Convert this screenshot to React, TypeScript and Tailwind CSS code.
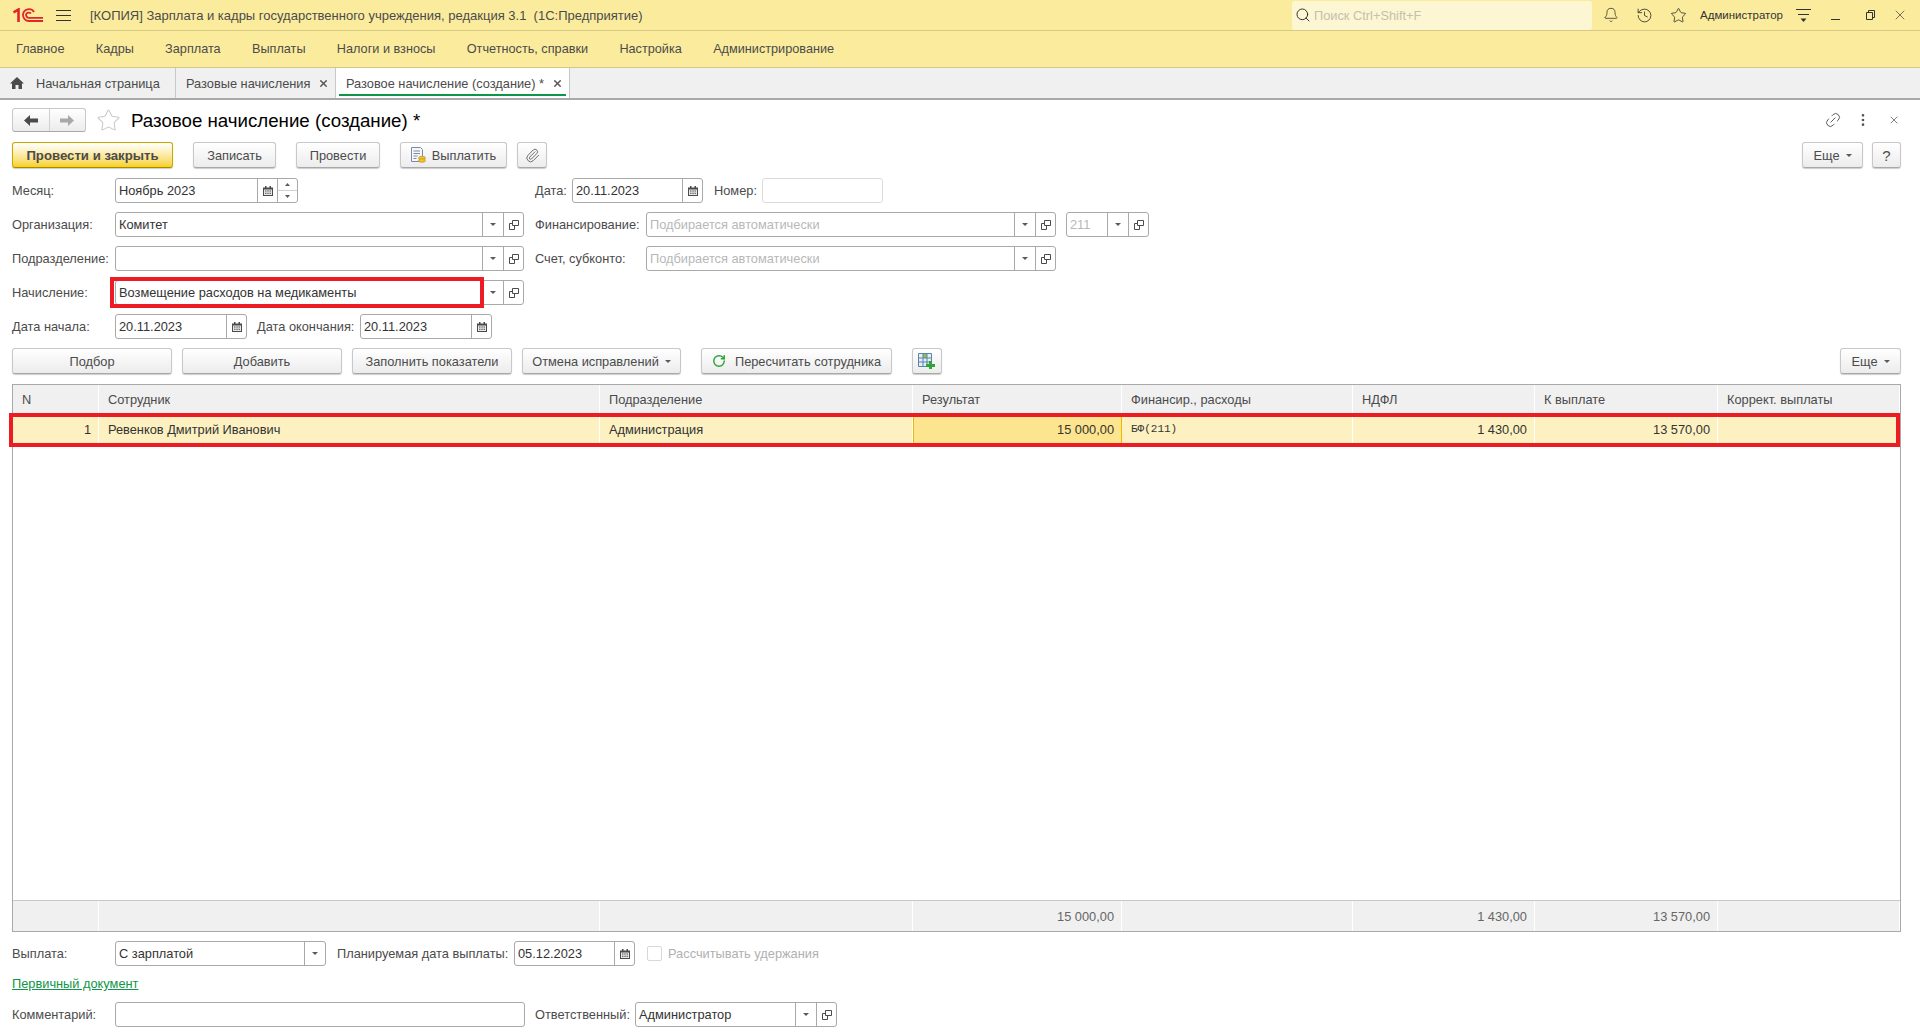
import { Bell, History, Paperclip, Search, Star, Link2, X, EllipsisVertical, RotateCw } from 'lucide-react';
import type { ReactNode } from 'react';

const DropIcon = () => (
  <svg width="6" height="3" viewBox="0 0 6 3">
    <path d="M0 0h6L3 3z" fill="#5a5a5a" />
  </svg>
);

const OpenIcon = () => (
  <svg width="10" height="10" viewBox="0 0 10 10" fill="none" stroke="#4b4b4b">
    <path d="M3.500.5h6v5h-6z" />
    <path d="M3.500 3.500H.5v6h5V6" />
  </svg>
);

const CalendarIcon = () => (
  <svg width="10" height="10" viewBox="0 0 10 10">
    <path d="M0 1.500h10V10H0z" fill="#4b4b4b" />
    <path d="M1 3.500h8V9H1z" fill="#e8e8e8" />
    <path d="M2 0h1.500v2.500H2zM6.500 0H8v2.500H6.500z" fill="#4b4b4b" />
    <path d="M2 4.500h1.500v1H2zM4.300 4.500h1.500v1H4.300zM6.500 4.500H8v1H6.500zM2 6.800h1.500v1H2zM4.300 6.800h1.500v1H4.300zM6.500 6.800H8v1H6.500z" fill="#4b4b4b" />
  </svg>
);

const Cell = ({ w, children }: { w: string; children: ReactNode }) => (
  <div className={`flex h-full flex-none items-center justify-center border-l border-[#a9a9a9] ${w}`}>{children}</div>
);

interface FieldProps {
  w: string;
  text?: string;
  hint?: boolean;
  calendar?: boolean;
  spin?: boolean;
  drop?: boolean;
  open?: boolean;
  light?: boolean;
}

const Field = ({ w, text, hint, calendar, spin, drop, open, light }: FieldProps) => (
  <div
    className={`flex h-[25px] flex-none items-center rounded-[3px] border bg-white ${w} ${
      light ? 'border-[#dcdcdc]' : 'border-[#a9a9a9]'
    }`}
  >
    <div className={`min-w-0 flex-1 whitespace-nowrap pl-[3px] ${hint ? 'text-[#b8b8b8]' : 'text-[#333333]'}`}>{text}</div>
    {calendar && (
      <Cell w="w-[20px]">
        <CalendarIcon />
      </Cell>
    )}
    {spin && (
      <div className="flex h-full w-[20px] flex-none flex-col border-l border-[#a9a9a9]">
        <div className="flex flex-1 items-center justify-center border-b border-[#d0d0d0]">
          <svg width="5" height="3" viewBox="0 0 5 3">
            <path d="M0 3h5L2.500 0z" fill="#5a5a5a" />
          </svg>
        </div>
        <div className="flex flex-1 items-center justify-center">
          <svg width="5" height="3" viewBox="0 0 5 3">
            <path d="M0 0h5L2.500 3z" fill="#5a5a5a" />
          </svg>
        </div>
      </div>
    )}
    {drop && (
      <Cell w="w-[21px]">
        <DropIcon />
      </Cell>
    )}
    {open && (
      <Cell w="w-[20px]">
        <OpenIcon />
      </Cell>
    )}
  </div>
);

const Label = ({ w, children, className = '' }: { w: string; children: ReactNode; className?: string }) => (
  <div className={`flex-none whitespace-nowrap text-[#4b4b4b] ${w} ${className}`}>{children}</div>
);

const Button = ({ w, children, className = '' }: { w: string; children: ReactNode; className?: string }) => (
  <button
    className={`flex h-[26px] flex-none items-center justify-center gap-[6px] whitespace-nowrap rounded-[3px] border border-[#c8c8c8] border-b-[#a8a8a8] bg-gradient-to-b from-white to-[#ececec] text-[#4b4b4b] shadow-[0_1px_1px_rgba(0,0,0,0.2)] ${w} ${className}`}
  >
    {children}
  </button>
);

const columns = 'grid grid-cols-[86px_501px_313px_209px_231px_182px_183px_182px]';

const menuItems = ['Главное', 'Кадры', 'Зарплата', 'Выплаты', 'Налоги и взносы', 'Отчетность, справки', 'Настройка', 'Администрирование'];

const headers = ['N', 'Сотрудник', 'Подразделение', 'Результат', 'Финансир., расходы', 'НДФЛ', 'К выплате', 'Коррект. выплаты'];

const totals = ['', '', '', '15 000,00', '', '1 430,00', '13 570,00', ''];

const App = () => {
  return (
    <div className="relative flex h-[1034px] w-[1920px] flex-col overflow-hidden bg-white font-['Liberation_Sans',Arial,sans-serif] text-[12.800px] leading-[17px] text-[#4b4b4b]">
      {/* Заголовок окна */}
      <div className="flex h-[31px] flex-none items-center border-b border-[#d8c983] bg-[#fbec9d]">
        <svg className="ml-[13px] flex-none" width="30" height="14" viewBox="0 0 30 14" fill="none" stroke="#e0252b">
          <path d="M0.500 4.500 L5.500 1.500 V14" strokeWidth="2.600" />
          <path d="M21 4 A6 6 0 0 0 10 6.500 A6 6 0 0 0 16 13 H30" strokeWidth="1.800" />
          <path d="M18 5.500 A3 3 0 0 0 13 6.500 A3 3 0 0 0 16 9.800 H30" strokeWidth="1.800" />
        </svg>
        <svg className="ml-[13px] flex-none" width="15" height="11" viewBox="0 0 15 11" stroke="#333333">
          <path d="M0 .5h15M0 5.500h15M0 10.500h15" />
        </svg>
        <div className="ml-[19px] w-[1202px] flex-none whitespace-nowrap text-[13px]">[КОПИЯ] Зарплата и кадры государственного учреждения, редакция 3.1&nbsp; (1С:Предприятие)</div>
        <div className="flex h-[29px] w-[300px] flex-none items-center gap-[3px] rounded-[3px] bg-[#fdf6d3] pl-[3px] text-[#c4c0ac]">
          <Search size={16} strokeWidth={1.500} className="text-[#333333]" />
          Поиск Ctrl+Shift+F
        </div>
        <Bell size={16} strokeWidth={1.200} className="ml-[11px] flex-none text-[#333333]" />
        <History size={17} strokeWidth={1.200} className="ml-[17px] flex-none text-[#333333]" />
        <Star size={17} strokeWidth={1.200} className="ml-[17px] flex-none text-[#333333]" />
        <div className="ml-[13px] w-[83px] flex-none whitespace-nowrap text-[11.500px] text-[#333333]">Администратор</div>
        <svg className="ml-[13px] flex-none" width="15" height="13" viewBox="0 0 15 13">
          <path d="M0 .5h15M2 5.500h11" stroke="#333333" />
          <path d="M4.500 9.500h6L7.500 13z" fill="#333333" />
        </svg>
        <svg className="ml-[20px] mt-[9px] flex-none" width="9" height="1" viewBox="0 0 9 1">
          <path d="M0 .5h9" stroke="#333333" />
        </svg>
        <svg className="ml-[26px] flex-none" width="9" height="10" viewBox="0 0 9 10" fill="none" stroke="#333333">
          <path d="M.5 2.500h6v7h-6z" />
          <path d="M2.500 2.500v-2h6v7h-2" />
        </svg>
        <X size={16} strokeWidth={1} className="ml-[17px] flex-none text-[#333333]" />
      </div>

      {/* Разделы */}
      <div className="flex h-[37px] flex-none items-center gap-[31.300px] border-b border-[#d4c78c] bg-[#fbec9d] pl-[16px] text-[12.700px]">
        {menuItems.map((item) => (
          <div key={item}>{item}</div>
        ))}
      </div>

      {/* Вкладки */}
      <div className="flex h-[32px] flex-none items-stretch border-b-2 border-[#a9a9a9] bg-[#f0f0f0]">
        <div className="flex w-[176px] flex-none items-center border-r border-[#c8c8c8] pl-[10px]">
          <svg width="14" height="12" viewBox="0 0 14 12">
            <path d="M7 0 14 6.500H12V12H8.500V8h-3v4H2V6.500H0z" fill="#4b4b4b" />
          </svg>
          <span className="ml-[12px]">Начальная страница</span>
        </div>
        <div className="flex w-[160px] flex-none items-center border-r border-[#c8c8c8] pl-[10px]">
          Разовые начисления
          <X size={11} strokeWidth={3} className="ml-[8px] text-[#555555]" />
        </div>
        <div className="relative flex w-[234px] flex-none items-center border-r border-[#c8c8c8] bg-white pl-[10px]">
          Разовое начисление (создание) *
          <X size={11} strokeWidth={3} className="ml-[8px] text-[#555555]" />
          <div className="absolute bottom-[2px] left-[3px] right-[3px] h-[2px] bg-[#0e9648]" />
        </div>
      </div>

      {/* Форма */}
      <div className="flex min-h-0 flex-1 flex-col pl-[12px] pr-[19px]">
        <div className="mt-[8px] flex h-[24px] flex-none items-center">
          <div className="flex h-[24px] w-[74px] flex-none items-stretch rounded-[3px] border border-[#c8c8c8] border-b-[#a8a8a8] bg-gradient-to-b from-white to-[#ececec]">
            <div className="flex flex-1 items-center justify-center border-r border-[#d0d0d0]">
              <svg width="14" height="11" viewBox="0 0 14 11">
                <path d="M6 0v3.500h8v4H6V11L0 5.500z" fill="#4b4b4b" />
              </svg>
            </div>
            <div className="flex flex-1 items-center justify-center">
              <svg width="14" height="11" viewBox="0 0 14 11">
                <path d="M8 0v3.500H0v4h8V11l6-5.500z" fill="#a8a8a8" />
              </svg>
            </div>
          </div>
          <Star size={25} strokeWidth={1} className="ml-[10px] flex-none text-[#c8c8c8]" />
          <div className="ml-[10px] pt-[1px] text-[18.700px] leading-[22px] text-black">Разовое начисление (создание) *</div>
          <div className="flex-1" />
          <Link2 size={18} strokeWidth={1.200} className="flex-none -rotate-45 text-[#555555]" />
          <EllipsisVertical size={16} strokeWidth={2} className="ml-[13px] flex-none text-[#555555]" />
          <X size={12} strokeWidth={1.500} className="ml-[17px] mr-[1px] flex-none text-[#555555]" />
        </div>

        <div className="mt-[10px] flex flex-none items-center">
          <Button w="w-[161px]" className="border-[#c9a800] border-b-[#a88c00] from-[#ffea55] to-[#f8d200] text-[13.200px] font-bold text-[#4a3b00]">
            Провести и закрыть
          </Button>
          <Button w="w-[83px]" className="ml-[20px]">Записать</Button>
          <Button w="w-[84px]" className="ml-[20px]">Провести</Button>
          <Button w="w-[107px]" className="ml-[20px]">
            <svg width="15" height="16" viewBox="0 0 15 16">
              <path d="M.5.500h9l2 2v12h-11z" fill="#f4f6fa" stroke="#7c8ba3" />
              <path d="M2.500 4h6.500M2.500 6.500h6.500M2.500 9h4M2.500 11.500h3" stroke="#7c8ba3" />
              <ellipse cx="11" cy="11" rx="3.500" ry="1.800" fill="#f1c232" stroke="#b68a10" strokeWidth=".6" />
              <ellipse cx="11" cy="13.500" rx="3.500" ry="1.800" fill="#f1c232" stroke="#b68a10" strokeWidth=".6" />
            </svg>
            Выплатить
          </Button>
          <Button w="w-[30px]" className="ml-[10px]">
            <Paperclip size={15} strokeWidth={1.500} className="text-[#666666]" />
          </Button>
          <div className="flex-1" />
          <Button w="w-[61px]" className="gap-[5px]">
            Еще
            <DropIcon />
          </Button>
          <Button w="w-[29px]" className="ml-[9px] text-[15px]">?</Button>
        </div>

        <div className="mt-[10px] flex flex-none items-center">
          <Label w="w-[103px]">Месяц:</Label>
          <Field w="w-[183px]" text="Ноябрь 2023" calendar spin />
          <Label w="w-[37px]" className="ml-[237px]">Дата:</Label>
          <Field w="w-[131px]" text="20.11.2023" calendar />
          <Label w="w-[48px]" className="ml-[11px]">Номер:</Label>
          <Field w="w-[121px]" light />
        </div>

        <div className="mt-[9px] flex flex-none items-center">
          <Label w="w-[103px]">Организация:</Label>
          <Field w="w-[409px]" text="Комитет" drop open />
          <Label w="w-[111px]" className="ml-[11px]">Финансирование:</Label>
          <Field w="w-[410px]" text="Подбирается автоматически" hint drop open />
          <div className="ml-[10px] flex-none">
            <Field w="w-[83px]" text="211" hint drop open />
          </div>
        </div>

        <div className="mt-[9px] flex flex-none items-center">
          <Label w="w-[103px]">Подразделение:</Label>
          <Field w="w-[409px]" drop open />
          <Label w="w-[111px]" className="ml-[11px]">Счет, субконто:</Label>
          <Field w="w-[410px]" text="Подбирается автоматически" hint drop open />
        </div>

        <div className="mt-[9px] flex flex-none items-center">
          <Label w="w-[103px]">Начисление:</Label>
          <div className="relative flex-none">
            <Field w="w-[409px]" text="Возмещение расходов на медикаменты" drop open />
            <div className="absolute -left-[5px] -top-[3px] h-[31px] w-[374px] border-[4px] border-[#ed1c24]" />
          </div>
        </div>

        <div className="mt-[9px] flex flex-none items-center">
          <Label w="w-[103px]">Дата начала:</Label>
          <Field w="w-[132px]" text="20.11.2023" calendar />
          <Label w="w-[103px]" className="ml-[10px]">Дата окончания:</Label>
          <Field w="w-[132px]" text="20.11.2023" calendar />
        </div>

        <div className="mt-[9px] flex flex-none items-center">
          <Button w="w-[160px]">Подбор</Button>
          <Button w="w-[160px]" className="ml-[10px]">Добавить</Button>
          <Button w="w-[160px]" className="ml-[10px]">Заполнить показатели</Button>
          <Button w="w-[159px]" className="ml-[10px]">
            Отмена исправлений
            <DropIcon />
          </Button>
          <Button w="w-[191px]" className="ml-[20px] gap-[9px]">
            <RotateCw size={14} strokeWidth={2.500} className="text-[#2ea43a]" />
            Пересчитать сотрудника
          </Button>
          <Button w="w-[30px]" className="ml-[20px]">
            <svg width="18" height="16" viewBox="0 0 18 16">
              <path d="M.5.500h13v13H.5z" fill="#e6eef5" stroke="#5b84a8" />
              <path d="M5 1h4v4H5z" fill="#8cc152" />
              <path d="M1 5h12M1 9h12M5 1v12M9 1v12" stroke="#5b84a8" />
              <path d="M11 8h3v3h3v3h-3v2h-3v-2H8v-3h3z" fill="#2ea43a" />
            </svg>
          </Button>
          <div className="flex-1" />
          <Button w="w-[61px]" className="gap-[5px]">
            Еще
            <DropIcon />
          </Button>
        </div>

        {/* Таблица */}
        <div className="relative mt-[10px] flex h-[548px] flex-none flex-col border border-[#a9a9a9]">
          <div className={`${columns} h-[29px] flex-none bg-[#f0f0f0]`}>
            {headers.map((header) => (
              <div key={header} className="flex items-center border-r border-white pl-[9px] text-[#4b4b4b]">
                {header}
              </div>
            ))}
          </div>
          <div className={`${columns} h-[31px] flex-none bg-[#fdf1c1] text-[#333333]`}>
            <div className="flex items-center justify-end border-r border-white pr-[7px]">1</div>
            <div className="flex items-center border-r border-white pl-[9px]">Ревенков Дмитрий Иванович</div>
            <div className="flex items-center border-r border-white pl-[9px]">Администрация</div>
            <div className="flex items-center justify-end border border-[#f2b600] bg-[#fde48f] pr-[7px]">15 000,00</div>
            <div className="flex items-center border-r border-white pl-[9px] font-['Liberation_Mono',monospace] text-[11px]">БФ(211)</div>
            <div className="flex items-center justify-end border-r border-white pr-[7px]">1 430,00</div>
            <div className="flex items-center justify-end border-r border-white pr-[7px]">13 570,00</div>
            <div />
          </div>
          <div className="flex-1" />
          <div className={`${columns} h-[31px] flex-none border-t border-[#c8c8c8] bg-[#f0f0f0] text-[#666666]`}>
            {totals.map((total, id) => (
              <div key={id} className="flex items-center justify-end border-r border-white pr-[7px]">
                {total}
              </div>
            ))}
          </div>
          <div className="absolute -left-[4px] top-[28px] h-[34px] w-[1891px] border-[4px] border-[#ed1c24]" />
        </div>

        <div className="mt-[9px] flex flex-none items-center">
          <Label w="w-[103px]">Выплата:</Label>
          <Field w="w-[211px]" text="С зарплатой" drop />
          <Label w="w-[177px]" className="ml-[11px]">Планируемая дата выплаты:</Label>
          <Field w="w-[121px]" text="05.12.2023" calendar />
          <div className="ml-[12px] h-[15px] w-[15px] flex-none rounded-[2px] border border-[#d8d8d8]" />
          <div className="ml-[6px] text-[#b0b0b0]">Рассчитывать удержания</div>
        </div>

        <div className="mt-[9px] flex-none text-[#0e9648] underline">Первичный документ</div>

        <div className="mt-[10px] flex flex-none items-center">
          <Label w="w-[103px]">Комментарий:</Label>
          <Field w="w-[410px]" />
          <Label w="w-[100px]" className="ml-[10px]">Ответственный:</Label>
          <Field w="w-[202px]" text="Администратор" drop open />
        </div>
      </div>
    </div>
  );
};

export default App;
